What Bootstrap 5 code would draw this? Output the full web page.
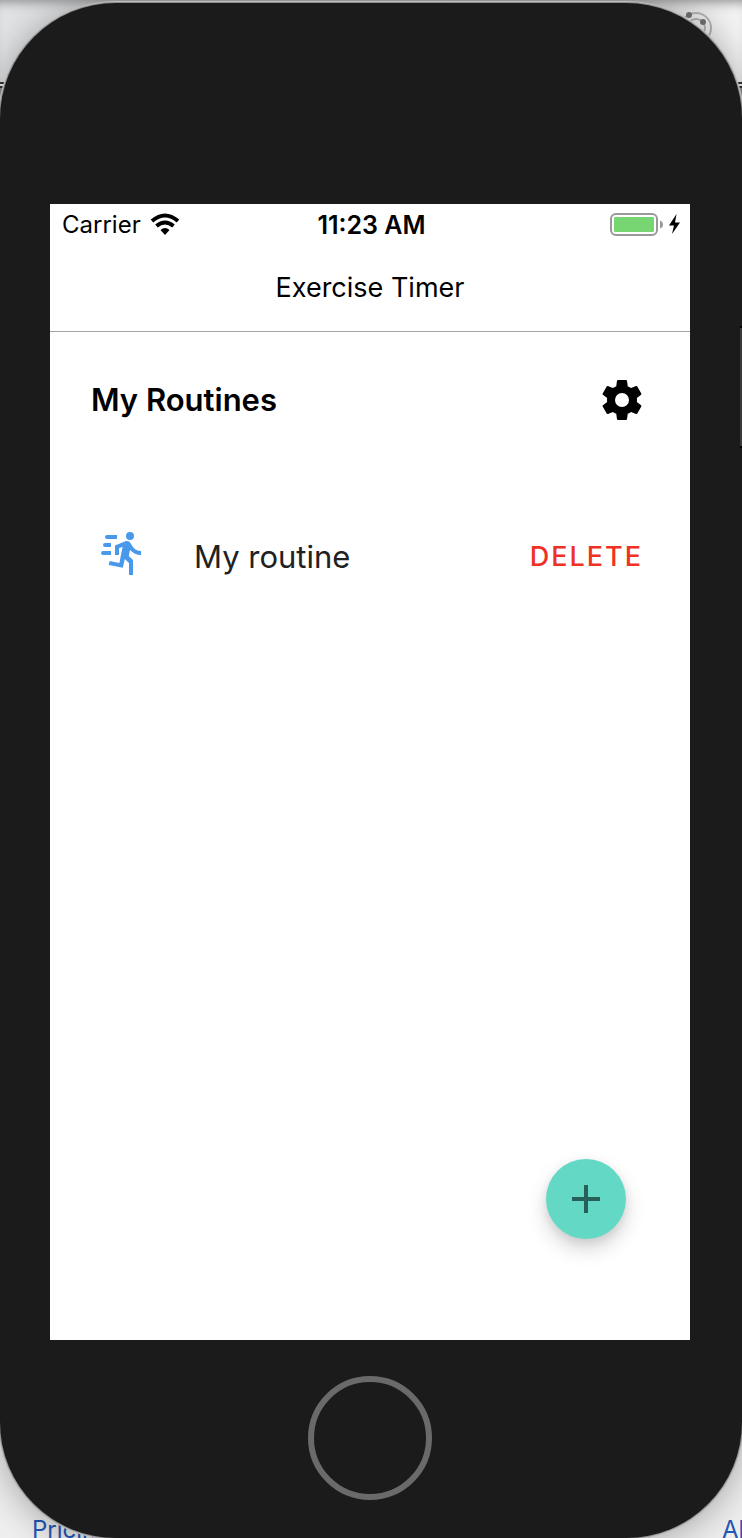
<!DOCTYPE html>
<html lang="en">
<head>
<meta charset="utf-8">
<meta name="viewport" content="width=device-width, initial-scale=1">
<title>Exercise Timer</title>
<link href="https://cdn.jsdelivr.net/npm/bootstrap@5.3.0/dist/css/bootstrap.min.css" rel="stylesheet">
<style>
  body { font-family: Inter, "Liberation Sans", sans-serif; color: #000; background: #dcdcdc; }
  .stage { grid-template-columns: minmax(0, 1fr); }
  .stage > * { grid-area: 1 / 1; }
  .backdrop { background: #efefef; }
  .backdrop-bar { height: 84px; padding: 10px 28px; background: linear-gradient(90deg, #e2e4e6, #dcdddf 110px, #dadada 620px, #f4f4f4); }
  .backdrop-bar { box-shadow: inset 0 10px 12px -8px #8a8a8a; border-bottom: 2px solid #333; }
  .backdrop-rule { height: 36px; margin-top: 2px; border-top: 2px solid #333; background: linear-gradient(#8c8c8c, #dcdcdc); }
  .backdrop-foot { padding: 0 0 0 32px; font-size: 24px; line-height: 16px; white-space: nowrap; }
  .backdrop-foot a { color: #2258b8; text-decoration: none; }
  .backdrop-foot a:last-child { width: 20px; }
  .phone {
    z-index: 1; margin-top: 3px; padding: 201px 52px 38px 50px;
    background: #1b1b1b; border-radius: 116px;
    box-shadow: 0 0 0 1px #8f8f8f, 0 0 0 2px #bdbdbd, 0 4px 36px 2px rgba(0, 0, 0, .3);
  }
  .side-key { right: 0; top: 323px; width: 2px; height: 122px; background: #3a3a3a; border-top: 2px solid #000; border-bottom: 2px solid #000; }
  .status { height: 42px; padding: 0 9px 0 12px; font-size: 24px; line-height: 42px; }
  .clock { font-size: 25px; }
  .title-bar { height: 86px; border-bottom: 1px solid #a5a5a5; }
  .title-bar h1 { font-size: 27px; line-height: 84px; font-weight: 400; }
  .content { padding: 44px 44px 101px 41px; }
  .content h2 { font-size: 31px; line-height: 48px; font-weight: 600; }
  .bare { padding: 0; border: 0; background: none; color: inherit; }
  .bare svg { display: block; }
  .routines { margin-top: 105px; }
  .routine-item { padding-left: 6px; padding-right: 3px; }
  .routine-item svg { color: #4899eb; }
  .routine-name { margin-left: 49px; font-size: 31px; line-height: 56px; color: #212121; text-decoration: none; }
  .delete { font-size: 27px; line-height: 56px; font-weight: 500; letter-spacing: 2px; color: #ee3124; }
  .fab { width: 80px; height: 80px; margin-right: 20px; background: #63d8c5; color: #285f58; box-shadow: 0 10px 20px rgba(0, 0, 0, .17), 0 3px 10px rgba(0, 0, 0, .08); }
  .home-key { width: 124px; height: 124px; margin-top: 36px; border: 6px solid #6a6a6a; }
</style>
</head>
<body>
<div class="stage d-grid min-vh-100 overflow-hidden">
  <div class="backdrop d-flex flex-column">
    <div class="backdrop-bar d-flex justify-content-end">
      <svg width="36" height="36" viewBox="0 0 36 36" fill="none" stroke="#b1b1b1" stroke-width="2" aria-hidden="true">
        <circle cx="18" cy="18" r="15"/><circle cx="18" cy="18" r="9"/>
        <g fill="#707070" stroke="none"><circle cx="11" cy="5" r="3"/><circle cx="25" cy="12" r="3"/></g>
      </svg>
    </div>
    <div class="backdrop-rule"></div>
    <div class="backdrop-foot d-flex justify-content-between mt-auto">
      <a href="#">Pricing</a>
      <a href="#">About</a>
    </div>
  </div>

  <div class="phone d-flex flex-column position-relative">
    <span class="side-key position-absolute"></span>
    <main class="bg-white d-flex flex-column flex-grow-1">
      <div class="status d-flex align-items-center">
        <div class="col d-flex align-items-center">
          <span>Carrier</span>
          <svg class="ms-2" width="32" height="24" viewBox="-2 0 32 24" fill="none" stroke="#000" aria-label="Wi-Fi">
            <path d="M1 8Q14-3 27 8" stroke-width="4"/>
            <path d="M5.5 13Q14 6 22.500 13" stroke-width="4"/>
            <path d="M9.500 17Q14 13 18.500 17L14 22Z" fill="#000" stroke="none"/>
          </svg>
        </div>
        <span class="clock fw-semibold">11:23 AM</span>
        <div class="col d-flex justify-content-end align-items-center">
          <svg width="72" height="26" viewBox="0 0 72 26" aria-label="Battery charging">
            <rect x="2" y="2" width="46" height="21" rx="5" fill="none" stroke="#999" stroke-width="2"/>
            <rect x="5" y="5" width="40" height="15" rx="1" fill="#77d572"/>
            <path d="M51 8.500Q54 9.500 54 12.500Q54 15.500 51 16.500Z" fill="#999"/>
            <path d="M67.500 2L60 13.500H65L63 22L71 10.500H66Z" fill="#000"/>
          </svg>
        </div>
      </div>
      <header class="title-bar text-center"><h1 class="m-0">Exercise Timer</h1></header>
      <section class="content d-flex flex-column flex-grow-1">
        <div class="d-flex align-items-center justify-content-between">
          <h2 class="m-0">My Routines</h2>
          <button class="bare" type="button" aria-label="Settings">
            <svg width="48" height="48" viewBox="0 0 24 24" fill="currentColor"><path d="M12,15.5A3.5,3.5 0 0,1 8.5,12A3.5,3.5 0 0,1 12,8.5A3.5,3.5 0 0,1 15.5,12A3.5,3.5 0 0,1 12,15.5M19.43,12.97C19.47,12.65 19.5,12.33 19.5,12C19.5,11.67 19.47,11.34 19.43,11L21.54,9.37C21.73,9.22 21.78,8.95 21.66,8.73L19.66,5.27C19.54,5.05 19.27,4.96 19.05,5.05L16.56,6.05C16.04,5.66 15.5,5.32 14.87,5.07L14.5,2.42C14.46,2.18 14.25,2 14,2H10C9.75,2 9.54,2.18 9.5,2.42L9.13,5.07C8.5,5.32 7.96,5.66 7.44,6.05L4.95,5.05C4.73,4.96 4.46,5.05 4.34,5.27L2.34,8.73C2.21,8.95 2.27,9.22 2.46,9.37L4.57,11C4.53,11.34 4.5,11.67 4.5,12C4.5,12.33 4.53,12.65 4.57,12.97L2.46,14.63C2.27,14.78 2.21,15.05 2.34,15.27L4.34,18.73C4.46,18.95 4.73,19.03 4.95,18.95L7.44,17.94C7.96,18.34 8.5,18.68 9.13,18.93L9.5,21.58C9.54,21.82 9.75,22 10,22H14C14.25,22 14.46,21.82 14.5,21.58L14.87,18.93C15.5,18.67 16.04,18.34 16.56,17.94L19.05,18.95C19.27,19.03 19.54,18.95 19.66,18.73L21.66,15.27C21.78,15.05 21.73,14.78 21.54,14.63L19.43,12.97Z"/></svg>
          </button>
        </div>
        <ul class="routines list-unstyled mb-0">
          <li class="routine-item d-flex align-items-start">
            <svg width="48" height="48" viewBox="0 0 24 24" fill="currentColor" aria-hidden="true"><path d="M16.5,5.5A2,2 0 0,0 18.5,3.5A2,2 0 0,0 16.5,1.5A2,2 0 0,0 14.5,3.5A2,2 0 0,0 16.5,5.5M12.9,19.4L13.9,15L16,17V23H18V15.5L15.9,13.5L16.5,10.5C17.89,12.09 19.89,13 22,13V11C20.24,11.03 18.6,10.11 17.7,8.6L16.7,7C16.34,6.4 15.7,6 15,6C14.7,6 14.5,6.1 14.2,6.1L9,8.3V13H11V9.6L12.8,8.9L11.2,17L6.3,16L5.9,18L12.9,19.4M4,9A1,1 0 0,1 3,8A1,1 0 0,1 4,7H7V9H4M5,5A1,1 0 0,1 4,4A1,1 0 0,1 5,3H10V5H5M3,13A1,1 0 0,1 2,12A1,1 0 0,1 3,11H7V13H3Z"/></svg>
            <a class="routine-name" href="#">My routine</a>
            <button class="bare delete ms-auto" type="button">DELETE</button>
          </li>
        </ul>
        <button class="fab bare rounded-circle d-flex align-items-center justify-content-center align-self-end mt-auto" type="button" aria-label="Add routine">
          <svg width="48" height="48" viewBox="0 0 24 24" fill="currentColor"><path d="M19,13H13V19H11V13H5V11H11V5H13V11H19V13Z"/></svg>
        </button>
      </section>
    </main>
    <button class="home-key bare rounded-circle align-self-center" type="button" aria-label="Home"></button>
  </div>
</div>
<script src="https://cdn.jsdelivr.net/npm/bootstrap@5.3.0/dist/js/bootstrap.bundle.min.js"></script>
</body>
</html>
